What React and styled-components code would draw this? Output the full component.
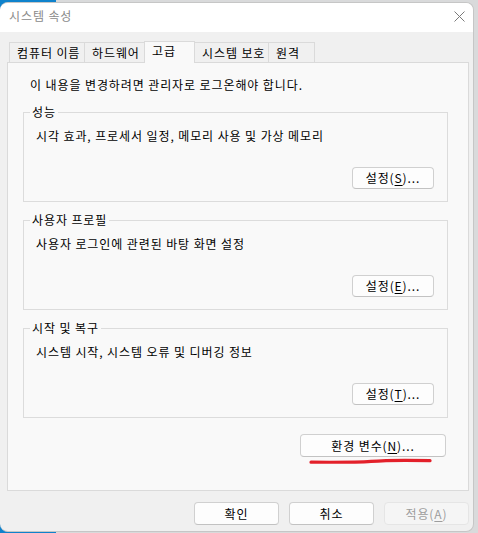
// 시스템 속성 대화상자 (고급 탭)
import React from 'react';
import styled, {createGlobalStyle, css} from 'styled-components';

const GlobalStyle = createGlobalStyle`
    html, body {
        margin: 0;
        padding: 0;
    }
    body {
        font-family: "Noto Sans CJK KR", "Noto Sans", sans-serif;
        font-size: 12px;
        letter-spacing: 0.9px;
        color: #000;
    }
`;

const Desktop = styled.div`
    width: 478px;
    height: 533px;
    box-sizing: border-box;
    padding-top: 2px;
    background: linear-gradient(90deg, #0f82cc 0 56px, #d9dadb 56px);
    overflow: hidden;
`;

const Window = styled.div`
    width: 474px;
    height: 530px;
    box-sizing: border-box;
    border: 1px solid #c6c6c6;
    border-left: none;
    border-radius: 8px;
    overflow: hidden;
    background: #f0f0f0;
    display: flex;
    flex-direction: column;
`;

const TitleBar = styled.div`
    height: 29px;
    flex: none;
    background: #fff;
    display: flex;
    align-items: flex-start;
    justify-content: space-between;
    padding: 5px 0 0 9px;
    box-sizing: border-box;
`;

const Title = styled.div`
    color: #8a8a8a;
    line-height: 16px;
`;

const CloseButton = styled.div`
    width: 26px;
    height: 16px;
    margin-right: 1px;
    display: flex;
    align-items: center;
    justify-content: center;
    color: #7a7a7a;
`;

const Body = styled.div`
    flex: 1;
    display: flex;
    flex-direction: column;
    padding: 9px 5px 0 7px;
`;

const TabStrip = styled.div`
    display: flex;
    align-items: flex-end;
    height: 21px;
    padding-left: 2px;
    position: relative;
    z-index: 1;
`;

const Tab = styled.div`
    width: ${p => p.w}px;
    height: 20px;
    box-sizing: border-box;
    border: 1px solid #dadada;
    border-bottom: none;
    background: #f0f0f0;
    padding: 1px 0 0 7px;
    line-height: 18px;
    white-space: nowrap;
    & + & {
        margin-left: -1px;
    }
    ${p => p.active && css`
        height: 22px;
        margin-bottom: -1px;
        background: #f9f9f9;
        padding-top: 0;
        line-height: 17px;
        position: relative;
        z-index: 2;
    `}
`;

const Panel = styled.div`
    width: 462px;
    height: 429px;
    flex: none;
    box-sizing: border-box;
    border: 1px solid #dadada;
    background: #f9f9f9;
    padding: 14px 20px 0 15px;
    display: flex;
    flex-direction: column;
`;

const Notice = styled.div`
    line-height: 16px;
    margin: 0 0 11px 7px;
`;

const Groups = styled.div`
    display: flex;
    flex-direction: column;
    gap: 10px;
`;

const Group = styled.fieldset`
    margin: 0;
    padding: 0 13px 12px 0;
    height: 98px;
    box-sizing: border-box;
    border: 1px solid #dcdcdc;
    display: flex;
    flex-direction: column;
    min-width: 0;
`;

const Legend = styled.legend`
    padding: 0 2px;
    margin-left: 6px;
    line-height: 16px;
`;

const Desc = styled.div`
    line-height: 16px;
    margin: 8px 0 0 12px;
`;

const Button = styled.button`
    font-family: inherit;
    font-size: 12px;
    letter-spacing: 0.9px;
    color: #000;
    width: ${p => p.w || 85}px;
    height: ${p => p.h || 23}px;
    padding: 0;
    box-sizing: border-box;
    background: #fdfdfd;
    border: 1px solid #d0d0d0;
    border-bottom-color: #c2c2c2;
    border-radius: 4px;
    line-height: 16px;
    ${p => p.disabled && css`
        color: #9d9d9d;
        background: #f5f5f5;
        border-color: #e5e5e5;
    `}
`;

const GroupButton = styled(Button)`
    margin-top: 23px;
    align-self: flex-end;
`;

const EnvRow = styled.div`
    display: flex;
    flex-direction: column;
    align-items: flex-end;
    margin-top: 16px;
`;

const EnvButton = styled(Button)`
    margin-right: 2px;
`;

const Scribble = styled.svg`
    display: block;
    margin: 1px 15px 0 0;
`;

const Footer = styled.div`
    display: flex;
    justify-content: flex-end;
    gap: 10px;
    padding: 11px 0 0;
    margin-right: -1px;
`;

const Key = styled.span`
    text-decoration: underline;
    text-underline-offset: 2px;
`;

const groups = [
    {title: '성능', desc: '시각 효과, 프로세서 일정, 메모리 사용 및 가상 메모리', key: 'S'},
    {title: '사용자 프로필', desc: '사용자 로그인에 관련된 바탕 화면 설정', key: 'E'},
    {title: '시작 및 복구', desc: '시스템 시작, 시스템 오류 및 디버깅 정보', key: 'T'},
];

const tabs = [
    {label: '컴퓨터 이름', w: 76},
    {label: '하드웨어', w: 61},
    {label: '고급', w: 51, active: true},
    {label: '시스템 보호', w: 75},
    {label: '원격', w: 47},
];

const App = () => {
    return (
        <>
            <GlobalStyle />
            <Desktop>
                <Window>
                    <TitleBar>
                        <Title>시스템 속성</Title>
                        <CloseButton>
                            <svg width="11" height="11" viewBox="0 0 11 11">
                                <path d="M0.5 0.5 L10.5 10.5 M10.5 0.5 L0.5 10.5" stroke="currentColor" strokeWidth="1" fill="none" />
                            </svg>
                        </CloseButton>
                    </TitleBar>
                    <Body>
                        <TabStrip>
                            {tabs.map(t => (
                                <Tab key={t.label} w={t.w} active={t.active}>{t.label}</Tab>
                            ))}
                        </TabStrip>
                        <Panel>
                            <Notice>이 내용을 변경하려면 관리자로 로그온해야 합니다.</Notice>
                            <Groups>
                                {groups.map(g => (
                                    <Group key={g.title}>
                                        <Legend>{g.title}</Legend>
                                        <Desc>{g.desc}</Desc>
                                        <GroupButton w={82} h={22}>
                                            설정(<Key>{g.key}</Key>)...
                                        </GroupButton>
                                    </Group>
                                ))}
                            </Groups>
                            <EnvRow>
                                <EnvButton w={146}>
                                    환경 변수(<Key>N</Key>)...
                                </EnvButton>
                                <Scribble width="124" height="6" viewBox="0 0 124 6">
                                    <path d="M2 4.2 C 30 4.4, 50 4.3, 62 3.4 C 76 2.2, 100 2.1, 121 2.6" stroke="#e3202a" strokeWidth="3.2" strokeLinecap="round" fill="none" />
                                </Scribble>
                            </EnvRow>
                        </Panel>
                        <Footer>
                            <Button>확인</Button>
                            <Button>취소</Button>
                            <Button disabled>적용(<Key>A</Key>)</Button>
                        </Footer>
                    </Body>
                </Window>
            </Desktop>
        </>
    );
};

export default App;
